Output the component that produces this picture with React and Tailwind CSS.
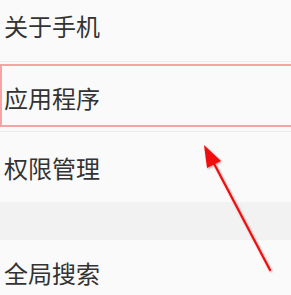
export default function App() {
  const font = { fontFamily: '"Noto Sans CJK SC", "Noto Sans", sans-serif' };
  return (
    <div className="relative w-[291px] h-[295px] overflow-hidden bg-[#fafafa] text-[#333]" style={font}>
      <div className="h-[61px] pl-[4px] pt-[13px] text-[24px] leading-[26px]">关于手机</div>
      <div className="h-px bg-[#ebebeb]" />
      <div className="relative h-[69px] pl-[4px] pt-[23px] text-[24px] leading-[26px]">
        应用程序
        <div className="absolute left-0 top-[2px] w-[300px] h-[63px] border-2 border-[#f6a3a3] blur-[0.3px]" />
      </div>
      <div className="h-px bg-[#ebebeb]" />
      <div className="h-[70px] pl-[4px] pt-[23px] text-[24px] leading-[26px]">权限管理</div>
      <div className="h-[38px] bg-[#f2f2f2]" />
      <div className="h-[55px] pl-[4px] pt-[20px] text-[24px] leading-[26px]">全局搜索</div>
      <svg className="absolute left-0 top-0" width="291" height="295" viewBox="0 0 291 295">
        <defs>
          <filter id="sh" x="-20%" y="-20%" width="140%" height="140%">
            <feDropShadow dx="1" dy="1" stdDeviation="1" floodColor="#000" floodOpacity="0.35" />
          </filter>
        </defs>
        <g filter="url(#sh)">
          <line x1="270" y1="270" x2="210" y2="156" stroke="#f01010" strokeWidth="2.2" strokeLinecap="round" />
          <polygon points="204,145 221,161 207,168" fill="#f01010" />
        </g>
      </svg>
    </div>
  );
}
